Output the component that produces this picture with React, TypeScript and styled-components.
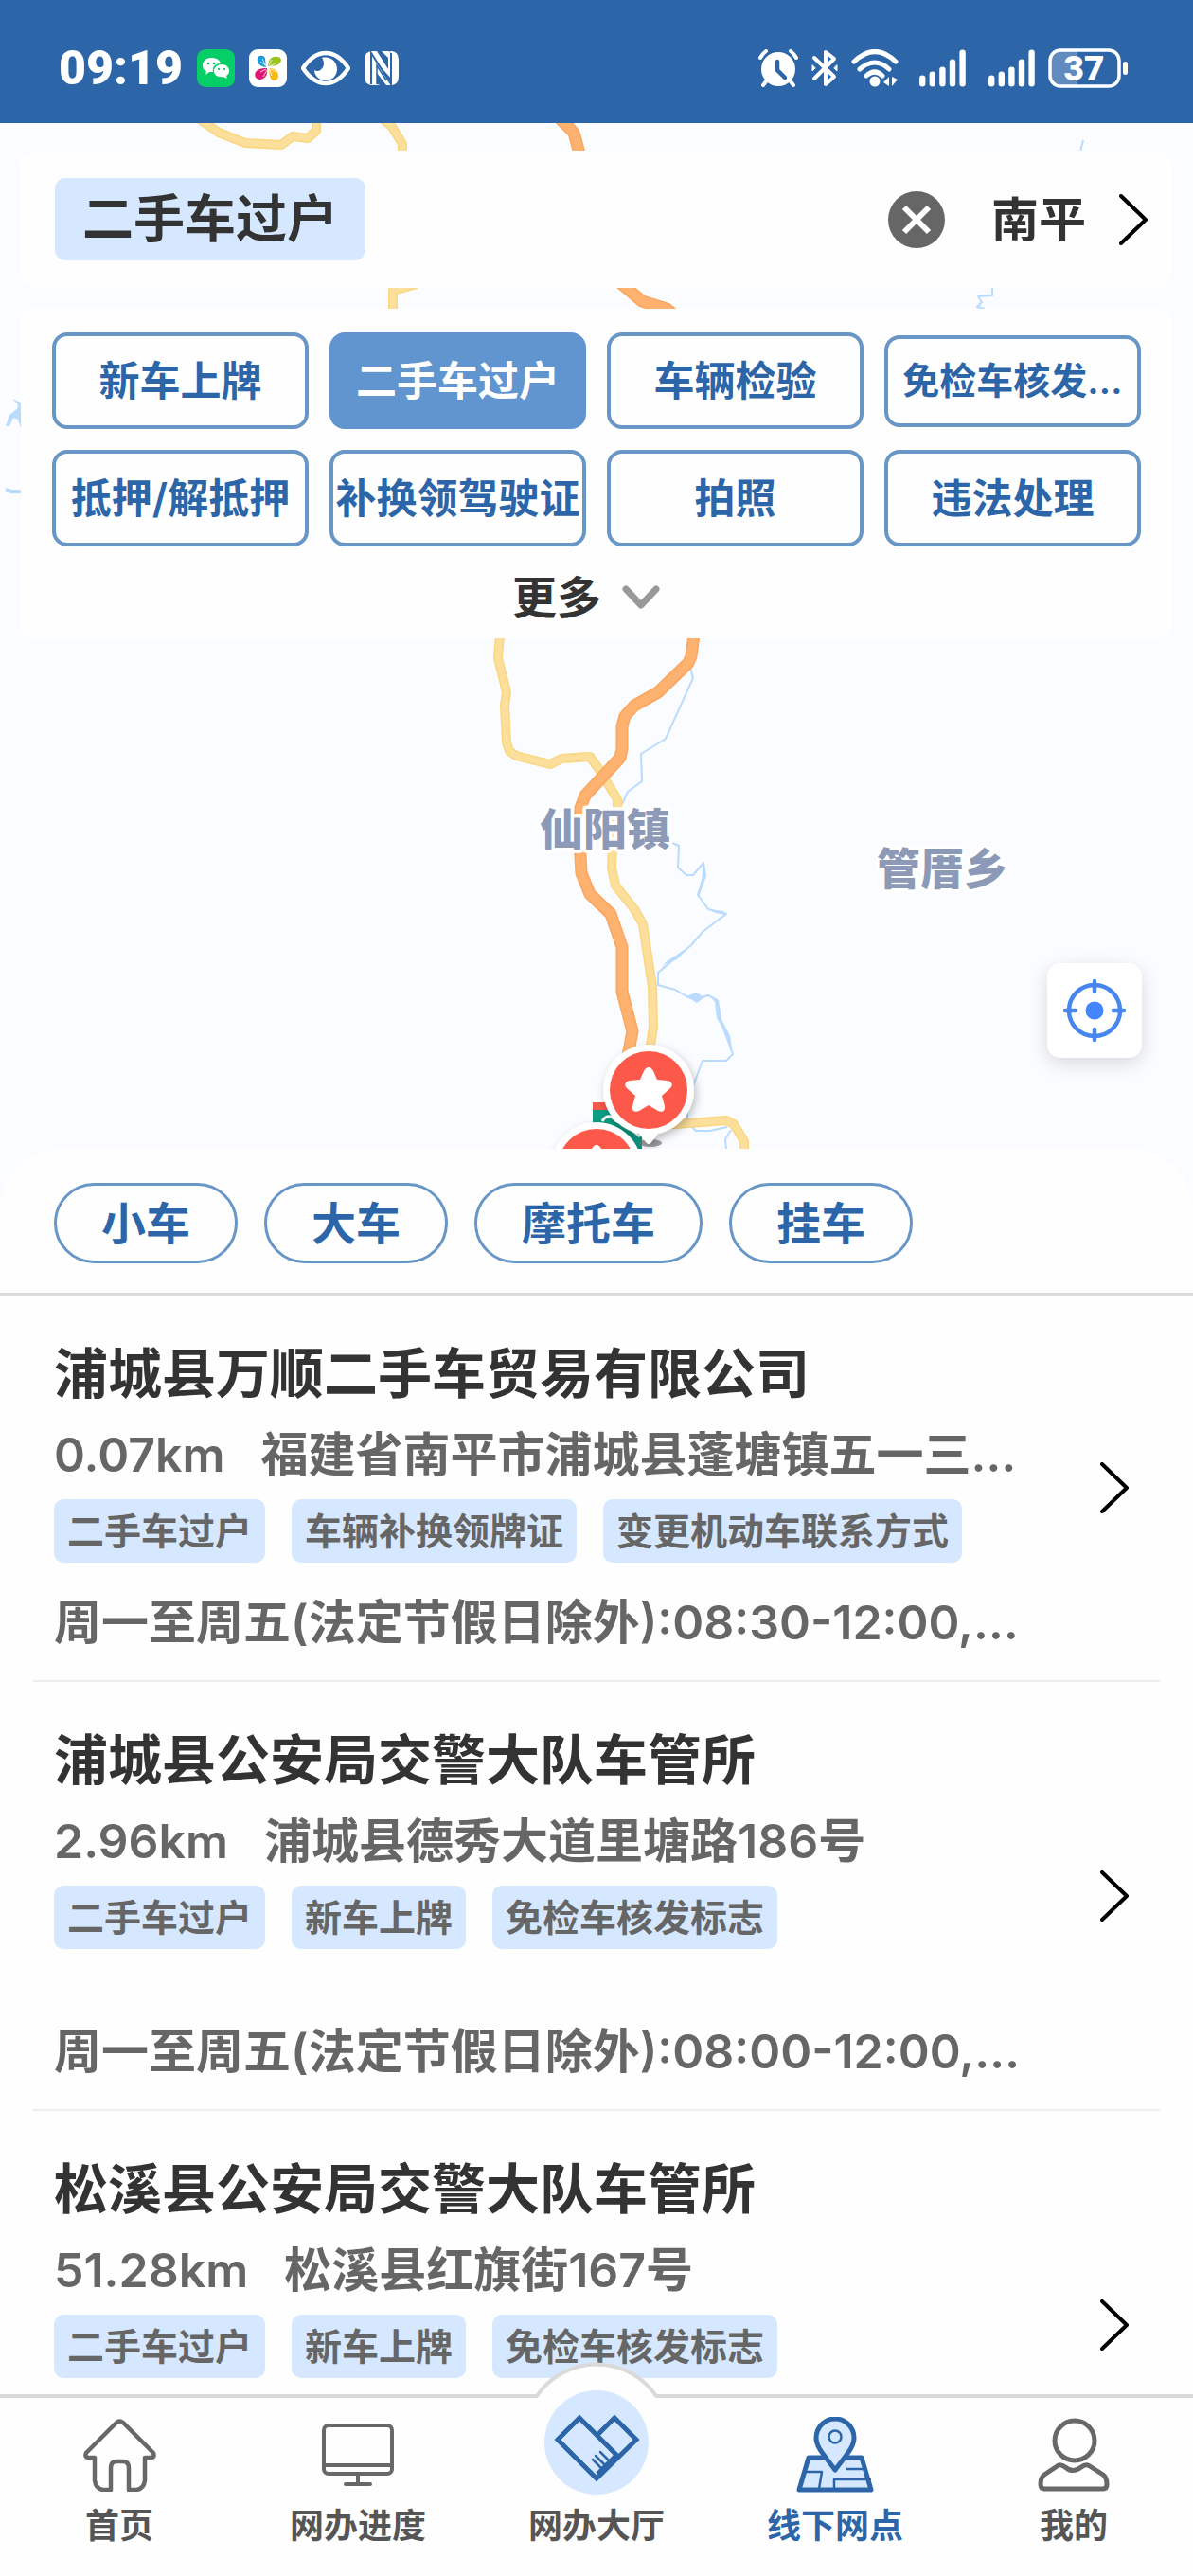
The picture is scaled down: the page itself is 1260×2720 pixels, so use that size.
import React from "react";
import styled, { createGlobalStyle, css } from "styled-components";

const color = {
  brand: "#2c65a8",
  brandSoft: "#6095d0",
  outline: "#6896c6",
  tint: "#d6e8ff",
  text: "#333333",
  muted: "#666666",
  map: "#fbfcff",
  card: "#fefefe",
};

const GlobalStyle = createGlobalStyle`
  * { box-sizing: border-box; }
  body {
    margin: 0;
    background: ${color.map};
    font-family: Inter, "Noto Sans CJK SC", "Noto Sans", sans-serif;
    font-weight: 600;
    color: ${color.text};
  }
  button {
    font: inherit;
    color: inherit;
    background: none;
    border: 0;
    padding: 0;
    margin: 0;
    cursor: pointer;
  }
  a { color: inherit; text-decoration: none; }
  h2, p, ul { margin: 0; padding: 0; }
  ul { list-style: none; }
  svg { display: block; flex: none; }
`;

const Screen = styled.div`
  display: flex;
  flex-direction: column;
  height: 100vh;
  overflow: hidden;
`;

const StatusBar = styled.header`
  display: flex;
  align-items: center;
  justify-content: space-between;
  flex: none;
  height: 130px;
  padding: 14px 67px 0 62px;
  background: ${color.brand};
  color: #fff;
`;

const StatusGroup = styled.div<{ $gap: number }>`
  display: flex;
  align-items: center;
  gap: ${(p) => p.$gap}px;
`;

const Clock = styled.time`
  font: 900 50px/60px Roboto, "Noto Sans", sans-serif;
`;

const MapArea = styled.section`
  position: relative;
  flex: none;
  min-height: 1083px;
  padding: 29px 22px;
  overflow: hidden;
`;

const MapCanvas = styled.svg`
  position: absolute;
  inset: 0;
  width: 100%;
  height: 100%;
`;

const MapLabel = styled.text`
  font: 900 46px "Noto Sans CJK SC", sans-serif;
  fill: #8c99b7;
  stroke: #fff;
  stroke-width: 7px;
  stroke-linejoin: round;
  paint-order: stroke;
`;

const Card = styled.div`
  position: relative;
  border-radius: 16px;
  background: ${color.card};
`;

const SearchCard = styled(Card)`
  display: flex;
  align-items: center;
  padding: 29px 26px 29px 36px;
`;

const Keyword = styled.span`
  margin-right: auto;
  padding: 0 29px;
  border-radius: 11px;
  background: ${color.tint};
  font-size: 54px;
  line-height: 87px;
`;

const CityButton = styled.button`
  display: flex;
  align-items: center;
  gap: 35px;
  margin-left: 49px;
  font-size: 50px;
  line-height: 66px;
`;

const FilterCard = styled(Card)`
  margin-top: 22px;
  padding: 25px 33px 12px;
`;

const FilterGrid = styled.div`
  display: grid;
  grid-template-columns: repeat(4, minmax(0, 1fr));
  align-items: center;
  gap: 22px;
`;

const FilterButton = styled.button<{ $active?: boolean; $compact?: boolean }>`
  height: ${(p) => (p.$compact ? 97 : 102)}px;
  border: 4px solid ${(p) => (p.$active ? color.brandSoft : color.outline)};
  border-radius: 16px;
  background: ${(p) => (p.$active ? color.brandSoft : "transparent")};
  color: ${(p) => (p.$active ? "#fff" : color.brand)};
  font-size: ${(p) => (p.$compact ? 39 : 43)}px;
  line-height: 60px;
  white-space: nowrap;
`;

const MoreButton = styled.button`
  display: flex;
  align-items: center;
  gap: 22px;
  margin: 22px auto 0;
  font-size: 47px;
  line-height: 63px;
`;

const LocateButton = styled.button`
  position: absolute;
  right: 54px;
  bottom: 96px;
  display: grid;
  place-items: center;
  width: 100px;
  height: 100px;
  border-radius: 14px;
  background: #fff;
  box-shadow: 0 6px 20px rgba(0, 0, 0, 0.14);
`;

const Sheet = styled.main`
  flex: 1;
  min-height: 0;
  overflow: hidden;
  border-radius: 66px 66px 0 0;
  background: ${color.card};
`;

const VehicleTabs = styled.div`
  display: flex;
  gap: 28px;
  padding: 36px 57px 31px;
  border-bottom: 3px solid #dcdcdc;
`;

const VehiclePill = styled.button`
  height: 85px;
  padding: 0 47px;
  border: 3px solid ${color.outline};
  border-radius: 43px;
  color: ${color.brand};
  font-size: 47px;
  line-height: 66px;
`;

const Branch = styled.li`
  margin: 0 35px;
  border-bottom: 2px solid #eeeeee;
`;

const BranchLink = styled.a`
  display: flex;
  align-items: center;
  justify-content: space-between;
  padding: 0 33px 0 22px;
`;

const BranchInfo = styled.div`
  min-width: 0;
  padding: 50px 0 28px;
`;

const BranchName = styled.h2`
  font-size: 57px;
  font-weight: 600;
  line-height: 66px;
`;

const Line = styled.p<{ $top: number }>`
  display: flex;
  gap: 38px;
  min-height: 66px;
  margin-top: ${(p) => p.$top}px;
  color: ${color.muted};
  font-size: 50px;
  line-height: 66px;
  white-space: nowrap;
`;

const TagRow = styled.div<{ $tall?: boolean }>`
  display: flex;
  align-items: flex-start;
  gap: 28px;
  margin-top: 14px;
  min-height: ${(p) => (p.$tall ? 112 : 67)}px;
`;

const Tag = styled.span`
  padding: 0 14px;
  border-radius: 10px;
  background: ${color.tint};
  color: ${color.muted};
  font-size: 39px;
  line-height: 67px;
  white-space: nowrap;
`;

const NavBar = styled.nav`
  position: relative;
  display: grid;
  grid-template-columns: repeat(5, 1fr);
  grid-template-rows: minmax(0, 1fr);
  flex: none;
  height: 192px;
  border-top: 4px solid #dadada;
  background: ${color.card};
`;

const NavHump = styled.svg`
  position: absolute;
  top: -40px;
  left: 50%;
  margin-left: -66px;
`;

const NavItem = styled.a<{ $active?: boolean }>`
  position: relative;
  display: flex;
  flex-direction: column;
  align-items: center;
  justify-content: flex-end;
  padding-bottom: 28px;
  color: ${(p) => (p.$active ? color.brand : "#555555")};
  font-size: 36px;
  line-height: 50px;
`;

const NavIcon = styled.span<{ $round?: boolean }>`
  display: grid;
  place-items: center;
  flex: none;
  width: 82px;
  height: 80px;
  margin-bottom: 10px;
  ${(p) =>
    p.$round &&
    css`
      width: 110px;
      height: 110px;
      margin-bottom: 8px;
      border-radius: 50%;
      background: ${color.tint};
    `}
`;

function ChevronRight() {
  return (
    <svg width="30" height="54" viewBox="0 0 30 54" fill="none" stroke="#000" strokeWidth="4" strokeLinecap="round" strokeLinejoin="round">
      <path d="M2 2 28 27 2 52" />
    </svg>
  );
}

function Signal({ width }: { width: number }) {
  const bars = [12, 16, 21, 29, 39];
  return (
    <svg width={width} height="40" fill="#fff">
      {bars.map((h, i) => (
        <rect key={h} x={i * 10.6} y={39.5 - h} width="6.4" height={h} rx="3.2" />
      ))}
    </svg>
  );
}

const STAR =
  "M0-24C2-24 4-22 5-20L9-11 20-10C25-9 26-5 23-2L14 6 17 17C18 22 14 24 10 22L0 16-10 22C-14 24-18 22-17 17L-14 6-23-2C-26-5-25-9-20-10L-9-11-5-20C-4-22-2-24 0-24Z";

function Pin({ x, y }: { x: number; y: number }) {
  return (
    <g transform={`translate(${x} ${y})`}>
      <ellipse cx="2" cy="56" rx="12" ry="4" fill="#777" opacity=".7" />
      <g filter="url(#pinShadow)">
        <path d="M-48 0A48 48 0 1 1 48 0C48 24 30 42 10 46L3 55Q0 59-3 55L-10 46C-30 42-48 24-48 0Z" fill="#fff" />
      </g>
      <circle r="41" fill="#fd594b" />
      <path d={STAR} fill="#fff" />
    </g>
  );
}

function MapDrawing() {
  return (
    <MapCanvas viewBox="0 130 1260 1083" preserveAspectRatio="xMidYMin slice" role="img" aria-label="地图">
      <defs>
        <filter id="pinShadow" x="-40%" y="-40%" width="180%" height="180%">
          <feDropShadow dx="2" dy="4" stdDeviation="5" floodColor="#000" floodOpacity=".25" />
        </filter>
        <g id="yellowRoads" fill="none" strokeLinejoin="round">
          <path d="M208 124 231 140 259 151 297 153 309 144 325 146 334 138V124" />
          <path d="M402 124 414 134 425 152V162" />
          <path d="M440 300 415 307V330" />
          <path d="M528 670 526 695 535 731 533 745 535 784 538 793 545 798 581 807 593 801 623 799 633 813 652 844V853L647 896 646 916 650 935 670 960 679 976 689 1042 690 1084 686 1110" />
          <path d="M700 1188 767 1183 775 1187 786 1205V1216" />
        </g>
        <g id="orangeRoads" fill="none" strokeLinejoin="round">
          <path d="M590 124 606 140 612 162" />
          <path d="M652 296 678 318 704 326 716 336" />
          <path d="M733 670 730 693 727 700 695 731 670 745 660 756 657 767V791L655 800 618 840 613 853 612 885 614 922 623 944 645 965 657 1000V1047L668 1089 663 1115" />
        </g>
      </defs>
      <rect y="130" width="1260" height="1083" fill={color.map} />
      <g fill="none" stroke="#b9dbfd" strokeWidth="2" strokeLinejoin="round">
        <path d="M729 705 732 716 703 780 677 796 678 825 663 836 657 849" />
        <path d="M710 890 717 893 716 916 725 924H732L743 911 745 925 737 945 748 960 767 965 742 984 730 998 695 1027V1040L713 1045 727 1053 735 1055 748 1051 757 1056 760 1075 774 1113 767 1120H742L733 1144 726 1169V1185L735 1194H750L768 1190" />
        <path d="M772 1193 766 1203 767 1213" />
        <path d="M1144 148 1141 160M1048 304V312L1033 313 1037 319 1032 324 1040 326" />
        <path d="M6 517 12 519 22 519" strokeWidth="4" />
      </g>
      <g fill="#b9dbfd">
        <path d="M13 421 22 425V452L19 443 14 441 10 450 6 450 10 438 18 432 19 427Z" />
        <path d="M725 1052 735 1048 742 1052 748 1050 736 1059Z" />
        <path d="M743 911 746 925 738 947 736 945 741 929ZM748 960 764 962 767 966 756 964ZM730 998 715 1013 703 1018 697 1025 703 1016ZM748 1050 759 1056 762 1076 771 1094 774 1113 768 1094 757 1075 755 1058Z" />
      </g>
      <use href="#yellowRoads" stroke="#fad67f" strokeWidth="10" />
      <use href="#yellowRoads" stroke="#fddf9c" strokeWidth="7" />
      <use href="#orangeRoads" stroke="#fba55e" strokeWidth="13" />
      <use href="#orangeRoads" stroke="#feb270" strokeWidth="10" />
      <MapLabel x="639" y="892" textAnchor="middle">仙阳镇</MapLabel>
      <MapLabel x="995" y="934" textAnchor="middle">管厝乡</MapLabel>
      <rect x="626" y="1164" width="30" height="9" fill="#f2594b" />
      <path d="M626 1172H656L678 1196V1213H626Z" fill="#0b9c83" />
      <path d="M636 1184Q642 1174 650 1183L664 1190 676 1200" fill="none" stroke="#fff" strokeWidth="3" />
      <Pin x={685} y={1151} />
      <Pin x={630} y={1233} />
    </MapCanvas>
  );
}

type BranchData = {
  name: string;
  distance: string;
  address: string;
  tags: string[];
  hours?: string;
  tall?: boolean;
};

const branches: BranchData[] = [
  {
    name: "浦城县万顺二手车贸易有限公司",
    distance: "0.07km",
    address: "福建省南平市浦城县蓬塘镇五一三…",
    tags: ["二手车过户", "车辆补换领牌证", "变更机动车联系方式"],
    hours: "周一至周五(法定节假日除外):08:30-12:00,…",
  },
  {
    name: "浦城县公安局交警大队车管所",
    distance: "2.96km",
    address: "浦城县德秀大道里塘路186号",
    tags: ["二手车过户", "新车上牌", "免检车核发标志"],
    hours: "周一至周五(法定节假日除外):08:00-12:00,…",
    tall: true,
  },
  {
    name: "松溪县公安局交警大队车管所",
    distance: "51.28km",
    address: "松溪县红旗街167号",
    tags: ["二手车过户", "新车上牌", "免检车核发标志"],
    tall: true,
  },
];

const filters = [
  { label: "新车上牌" },
  { label: "二手车过户", active: true },
  { label: "车辆检验" },
  { label: "免检车核发…", compact: true },
  { label: "抵押/解抵押" },
  { label: "补换领驾驶证" },
  { label: "拍照" },
  { label: "违法处理" },
];

const vehicles = ["小车", "大车", "摩托车", "挂车"];

function StatusIconsLeft() {
  return (
    <>
      <svg width="40" height="40" viewBox="0 0 40 40">
        <rect width="40" height="40" rx="9" fill="#07cf67" />
        <path d="M15 9C9 9 6 13 6 17c0 3 1 5 4 6l-1 4 4-3h4c-1-6 3-9 8-9-1-4-5-6-10-6Z" fill="#fff" />
        <path d="M26 16c5 0 8 3 8 7 0 2-1 4-3 5l1 3-4-2c-6 1-10-2-10-6s4-7 8-7Z" fill="#fff" />
        <g fill="#07b45a">
          <circle cx="12" cy="15" r="1.3" />
          <circle cx="18" cy="15" r="1.3" />
          <circle cx="23" cy="21" r="1.1" />
          <circle cx="29" cy="21" r="1.1" />
        </g>
      </svg>
      <svg width="40" height="40" viewBox="0 0 40 40">
        <rect width="40" height="40" rx="9" fill="#fff" />
        <path d="M18 19C10 18 8 13 9 9c2-3 7-3 8 1Z" fill="#189ad8" />
        <path d="M20 18c0-7 4-11 10-10 5 0 5 6 1 8-3 2-7 1-11 2Z" fill="#9bc31c" />
        <path d="M19 20c1 6-1 11-7 12-5 0-7-4-5-8 3-4 8-4 12-4Z" fill="#df1874" />
        <path d="M22 20c6 0 9 4 9 9-1 5-6 5-8 2-2-4-2-8-1-11Z" fill="#f8b90c" />
        <path d="M12 13 17 17M14 10 18 18M24 11 21 17M29 14 22 18M12 24 18 21M15 29 19 22M24 28 22 21M29 24 23 21" stroke="#fff" strokeWidth=".8" />
      </svg>
      <svg width="52" height="38" viewBox="0 0 52 38" fill="none">
        <path d="M2 19C10 7 18 3 26 3s16 4 24 16C42 31 34 35 26 35S10 31 2 19Z" stroke="#fff" strokeWidth="4.5" strokeLinejoin="round" />
        <path d="M22 8c9-2 16 4 16 12 0 7-5 12-12 12s-12-5-12-11c5 4 14-4 8-13Z" fill="#fff" />
      </svg>
      <svg width="36" height="38" viewBox="0 0 36 38">
        <path d="M7 1H13L25 20V8L18 1H26L29 4V31L13 13V37H7Q0 36 0 28V10Q0 2 7 1Z" fill="#fff" />
        <path d="M27 1H29Q36 2 36 10V28Q36 36 29 37H23L13 24V36L17 37H9L6 33V5L28 34 29 6Z" fill="#fff" />
        <path d="M7 36V3L28 36V3" fill="none" stroke={color.brand} strokeWidth="2" />
        <path d="M13 36V16L23 32" fill="none" stroke={color.brand} strokeWidth="1.5" />
      </svg>
    </>
  );
}

function StatusIconsRight() {
  return (
    <>
      <svg width="42" height="40" viewBox="0 0 42 40" fill="none" stroke="#fff" strokeLinecap="round">
        <circle cx="21" cy="21" r="18" fill="#fff" stroke="none" />
        <path d="M2 9Q4 5 8 2M40 9Q38 5 34 2M8 34 5 38M34 34 37 38" strokeWidth="4" />
        <path d="M20 13V22L28 30" stroke={color.brand} strokeWidth="4.5" />
      </svg>
      <svg width="28" height="40" viewBox="0 0 28 40" fill="none" stroke="#fff" strokeWidth="4" strokeLinejoin="round" strokeLinecap="round">
        <path d="M3 9 24 29 15 37V3L24 10 3 31" />
        <path d="M1 17V23L4 20ZM27 17V23L24 20Z" fill="#fff" strokeWidth="1" />
      </svg>
      <svg width="58" height="40" viewBox="0 0 58 40" fill="none" stroke="#fff" strokeWidth="5" strokeLinecap="round">
        <path d="M3 13Q25-8 47 13M9 21Q25 7 40 21M16 28Q25 20 33 28" />
        <circle cx="25" cy="34" r="5.5" fill="#fff" stroke="none" />
        <path d="M40 29V39L34 35ZM43 29V39L49 32Z" fill="#fff" stroke="none" />
      </svg>
      <Signal width={59} />
      <Signal width={49} />
      <svg width="86" height="42" viewBox="0 0 86 42">
        <path d="M12 2H31V40H12Q2 40 2 28V14Q2 2 12 2Z" fill="#fff" opacity=".25" />
        <rect x="2" y="2" width="73" height="38" rx="11" fill="none" stroke="#fff" strokeWidth="3.5" />
        <rect x="79" y="14" width="5" height="14" rx="2.5" fill="#fff" />
        <text x="38" y="34" textAnchor="middle" fill="#fff" fontFamily="Roboto, sans-serif" fontWeight="900" fontSize="37">37</text>
      </svg>
    </>
  );
}

function HomeIcon() {
  return (
    <svg width="77" height="77" viewBox="0 0 77 77" fill="none" stroke="#686868" strokeWidth="4.5" strokeLinejoin="round">
      <path d="M35 4Q38 1 42 4L74 36Q76 41 71 41H65V65Q64 74 56 75H48V52Q48 45 42 45H35Q29 45 29 52V75H21Q13 74 12 65V41H6Q1 41 3 36Z" />
    </svg>
  );
}

function MonitorIcon() {
  return (
    <svg width="76" height="68" viewBox="0 0 76 68" fill="none" stroke="#686868" strokeWidth="4" strokeLinecap="round">
      <rect x="2" y="3" width="72" height="51" rx="5" />
      <path d="M2 45H74M38 54V64M25 65H51" />
    </svg>
  );
}

function HandshakeIcon() {
  return (
    <svg width="110" height="110" viewBox="0 0 110 110" fill="none" stroke={color.brand} strokeWidth="5">
      <path d="M77 69 37 29 14 52 55 93 97 52 74 29 56 47" />
      <path d="M51 73 60 82M54 69 65 80M59 65 70 76" strokeWidth="2.5" strokeLinecap="round" />
      <path d="M57 89 77 69" strokeWidth="7" />
    </svg>
  );
}

function MapPinIcon() {
  return (
    <svg width="82" height="80" viewBox="0 0 82 80" fill={color.tint} stroke={color.brand} strokeWidth="5" strokeLinejoin="round">
      <path d="M13 43H69L79 77H3Z" />
      <path d="M10 58H27L24 76M79 66H40V76M53 55H73" fill="none" strokeWidth="2.5" />
      <path d="M41 56C31 42 21 33 21 22A20 20 0 0 1 61 22C61 33 51 42 41 56Z" />
      <circle cx="41" cy="21" r="6.5" strokeWidth="2.5" />
    </svg>
  );
}

function PersonIcon() {
  return (
    <svg width="76" height="78" viewBox="0 0 76 78" fill="none" stroke="#686868" strokeWidth="5" strokeLinejoin="round">
      <circle cx="39" cy="24" r="21" />
      <path d="M22 50Q25 49 29 52 37 59 46 52 51 48 55 51L69 60Q73 63 73 70 73 75 69 75H7Q3 75 3 70 3 63 7 60Z" />
    </svg>
  );
}

const navItems = [
  { label: "首页", icon: <HomeIcon /> },
  { label: "网办进度", icon: <MonitorIcon /> },
  { label: "网办大厅", icon: <HandshakeIcon />, round: true },
  { label: "线下网点", icon: <MapPinIcon />, active: true },
  { label: "我的", icon: <PersonIcon /> },
];

export default function App() {
  return (
    <Screen>
      <GlobalStyle />
      <StatusBar>
        <StatusGroup $gap={15}>
          <Clock>09:19</Clock>
          <StatusIconsLeft />
        </StatusGroup>
        <StatusGroup $gap={14}>
          <StatusIconsRight />
        </StatusGroup>
      </StatusBar>

      <MapArea>
        <MapDrawing />
        <SearchCard>
          <Keyword>二手车过户</Keyword>
          <button type="button" aria-label="清除">
            <svg width="60" height="60" viewBox="0 0 60 60">
              <circle cx="30" cy="30" r="30" fill="#666" />
              <path d="M17 17 43 43M43 17 17 43" stroke="#fff" strokeWidth="6" />
            </svg>
          </button>
          <CityButton type="button">
            南平
            <ChevronRight />
          </CityButton>
        </SearchCard>
        <FilterCard>
          <FilterGrid>
            {filters.map((f) => (
              <FilterButton key={f.label} type="button" $active={f.active} $compact={f.compact}>
                {f.label}
              </FilterButton>
            ))}
          </FilterGrid>
          <MoreButton type="button">
            更多
            <svg width="62" height="26" viewBox="0 0 62 26" fill="none" stroke="#999" strokeWidth="7" strokeLinecap="round" strokeLinejoin="round">
              <path d="M4 4 20 21 36 4" />
            </svg>
          </MoreButton>
        </FilterCard>
        <LocateButton type="button" aria-label="定位">
          <svg width="70" height="70" viewBox="0 0 70 70" fill="none" stroke="#4686ee" strokeWidth="4.5" strokeLinecap="round">
            <circle cx="35" cy="35" r="27" />
            <path d="M35 4V15M35 55V66M4 35H15M55 35H66" />
            <circle cx="35" cy="35" r="9.5" fill="#4285ff" stroke="none" />
          </svg>
        </LocateButton>
      </MapArea>

      <Sheet>
        <VehicleTabs>
          {vehicles.map((v) => (
            <VehiclePill key={v} type="button">
              {v}
            </VehiclePill>
          ))}
        </VehicleTabs>
        <ul>
          {branches.map((b) => (
            <Branch key={b.name}>
              <BranchLink href="#">
                <BranchInfo>
                  <BranchName>{b.name}</BranchName>
                  <Line $top={19}>
                    <span>{b.distance}</span>
                    <span>{b.address}</span>
                  </Line>
                  <TagRow $tall={b.tall}>
                    {b.tags.map((t) => (
                      <Tag key={t}>{t}</Tag>
                    ))}
                  </TagRow>
                  <Line $top={30}>{b.hours}</Line>
                </BranchInfo>
                <ChevronRight />
              </BranchLink>
            </Branch>
          ))}
        </ul>
      </Sheet>

      <NavBar>
        <NavHump width="132" height="42" viewBox="0 0 132 42">
          <path d="M0 42V38L4 38A76 76 0 0 1 128 38H132V42Z" fill={color.card} />
          <path d="M0 38H3A76 76 0 0 1 129 38H132" fill="none" stroke="#dadada" strokeWidth="4" />
        </NavHump>
        {navItems.map((n) => (
          <NavItem key={n.label} href="#" $active={n.active}>
            <NavIcon $round={n.round}>{n.icon}</NavIcon>
            {n.label}
          </NavItem>
        ))}
      </NavBar>
    </Screen>
  );
}
